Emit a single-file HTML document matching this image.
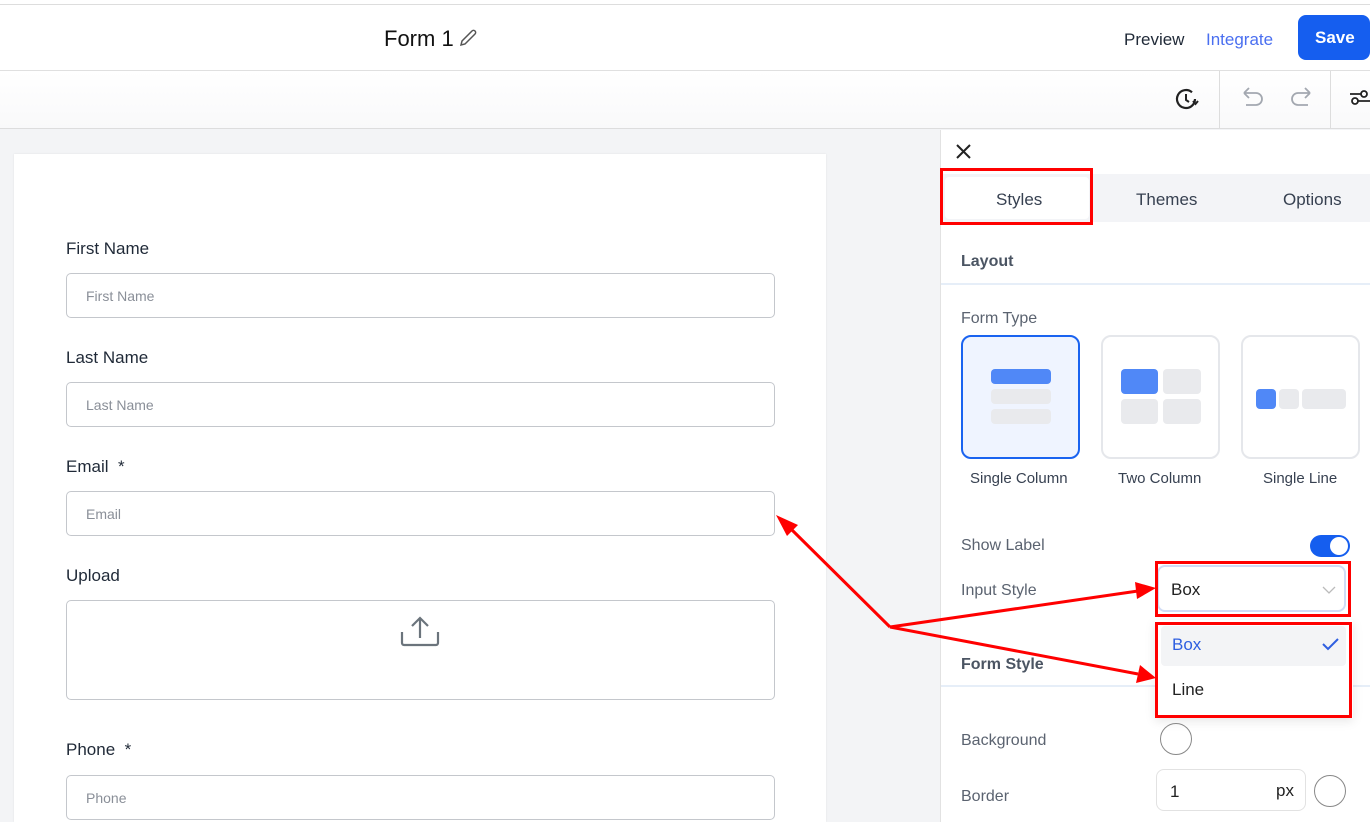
<!DOCTYPE html><html><head><style>
*{box-sizing:border-box;margin:0;padding:0}
html,body{width:1370px;height:822px;overflow:hidden}
body{font-family:"Liberation Sans",sans-serif;background:#f3f4f6;position:relative;color:#1f2937}
.a{position:absolute}
.lbl{font-size:17px;color:#1f2937}
.inp{position:absolute;left:66px;width:709px;height:45px;border:1px solid #c4c7cc;border-radius:5px;background:#fff;font-size:14px;color:#8a8f98;padding:14px 19px}
.pl{font-size:16px;color:#5b6370}
.card{position:absolute;top:335px;width:119px;height:124px;border:2px solid #e5e7eb;border-radius:10px;background:#fff}
.b{position:absolute;border-radius:4px;background:#e9eaed}
.bl{background:#5088f7}
</style></head><body>
<div class="a" style="left:0;top:0;width:1370px;height:4px;background:#fff"></div>
<div class="a" style="left:0;top:4px;width:1370px;height:67px;background:#fff;border-top:1px solid #ddd;border-bottom:1px solid #e0e0e0"></div>
<div class="a" style="left:384px;top:26px;font-size:22px;color:#111">Form 1</div>
<svg class="a" style="left:457px;top:27px" width="22" height="22" viewBox="0 0 22 22"><path d="M4 18l1-4L15 4a2 2 0 013 3L8 17z" fill="none" stroke="#555" stroke-width="1.5"/></svg>
<div class="a" style="left:1124px;top:30px;font-size:17px;color:#1f2937">Preview</div>
<div class="a" style="left:1206px;top:30px;font-size:17px;color:#4a6ff0">Integrate</div>
<div class="a" style="left:1298px;top:15px;width:72px;height:45px;background:#155eef;border-radius:8px;color:#fff;font-weight:bold;font-size:17px;padding:13px 0 0 17px">Save</div>
<div class="a" style="left:0;top:71px;width:1370px;height:58px;background:linear-gradient(#fff,#f9f9fa);border-bottom:1px solid #ddd"></div>
<div class="a" style="left:1219px;top:71px;width:1px;height:57px;background:#ddd"></div>
<div class="a" style="left:1330px;top:71px;width:1px;height:57px;background:#ddd"></div>
<svg class="a" style="left:1174px;top:86px" width="26" height="26" viewBox="0 0 26 26"><path d="M21 13a9 9 0 11-3-6.7" fill="none" stroke="#222" stroke-width="2.2"/><path d="M12 8v6l3 2" fill="none" stroke="#222" stroke-width="2"/><path d="M19 15l2.5 3 2.5-3" fill="none" stroke="#222" stroke-width="2"/></svg>
<svg class="a" style="left:1240px;top:84px" width="30" height="28" viewBox="0 0 30 28"><path d="M4 9h12a6 6 0 010 12H6M4 9l5-5M4 9l5 5" fill="none" stroke="#a3a8b0" stroke-width="1.8"/></svg>
<svg class="a" style="left:1284px;top:84px" width="30" height="28" viewBox="0 0 30 28"><path d="M26 9H14a6 6 0 000 12h10M26 9l-5-5M26 9l-5 5" fill="none" stroke="#a3a8b0" stroke-width="1.8"/></svg>
<svg class="a" style="left:1350px;top:88px" width="20" height="20"><circle cx="14" cy="6" r="3" fill="none" stroke="#222" stroke-width="1.8"/><circle cx="5" cy="13" r="3" fill="none" stroke="#222" stroke-width="1.8"/><path d="M0 6h11M8 13h12" stroke="#222" stroke-width="1.8"/></svg>

<div class="a" style="left:14px;top:154px;width:812px;height:668px;background:#fff;box-shadow:0 0 2px rgba(0,0,0,.08)"></div>
<div class="a lbl" style="left:66px;top:239px">First Name</div><div class="inp" style="top:273px">First Name</div>
<div class="a lbl" style="left:66px;top:348px">Last Name</div><div class="inp" style="top:382px">Last Name</div>
<div class="a lbl" style="left:66px;top:457px">Email&nbsp; *</div><div class="inp" style="top:491px">Email</div>
<div class="a lbl" style="left:66px;top:566px">Upload</div><div class="inp" style="top:600px;height:100px"></div>
<svg class="a" style="left:400px;top:614px" width="40" height="34"><path d="M2 18v11a2 2 0 002 2h32a2 2 0 002-2V18M20 24V4M12 12l8-8 8 8" fill="none" stroke="#6b747c" stroke-width="2.2"/></svg>
<div class="a lbl" style="left:66px;top:740px">Phone&nbsp; *</div><div class="inp" style="top:775px">Phone</div>

<div class="a" style="left:940px;top:130px;width:430px;height:692px;background:#fff;border-left:1px solid #e2e2e2"></div>
<svg class="a" style="left:955px;top:143px" width="17" height="17"><path d="M2 2l13 13M15 2L2 15" stroke="#222" stroke-width="2"/></svg>
<div class="a" style="left:941px;top:174px;width:429px;height:48px;background:#f3f4f7"></div>
<div class="a" style="left:945px;top:177px;width:144px;height:42px;background:#fff;border-radius:4px"></div>
<div class="a" style="left:996px;top:190px;font-size:17px;color:#374151">Styles</div>
<div class="a" style="left:1136px;top:190px;font-size:17px;color:#374151">Themes</div>
<div class="a" style="left:1283px;top:190px;font-size:17px;color:#374151">Options</div>
<div class="a" style="left:940px;top:168px;width:153px;height:57px;border:3px solid #f00"></div>
<div class="a" style="left:961px;top:253px;font-size:16px;font-weight:bold;color:#4b5563">Layout</div>
<div class="a" style="left:941px;top:283px;width:429px;height:2px;background:#e6eef8"></div>
<div class="a pl" style="left:961px;top:310px">Form Type</div>
<div class="card" style="left:961px;border-color:#1a63f0;background:#eff4ff"><div class="b bl" style="left:28px;top:32px;width:60px;height:15px"></div><div class="b" style="left:28px;top:52px;width:60px;height:15px"></div><div class="b" style="left:28px;top:72px;width:60px;height:15px"></div></div>
<div class="card" style="left:1101px"><div class="b bl" style="left:18px;top:32px;width:37px;height:25px"></div><div class="b" style="left:60px;top:32px;width:38px;height:25px"></div><div class="b" style="left:18px;top:62px;width:37px;height:25px"></div><div class="b" style="left:60px;top:62px;width:38px;height:25px"></div></div>
<div class="card" style="left:1241px"><div class="b bl" style="left:13px;top:52px;width:20px;height:20px"></div><div class="b" style="left:36px;top:52px;width:20px;height:20px"></div><div class="b" style="left:59px;top:52px;width:44px;height:20px"></div></div>
<div class="a" style="left:970px;top:470px;font-size:15px;color:#374151">Single Column</div>
<div class="a" style="left:1118px;top:470px;font-size:15px;color:#374151">Two Column</div>
<div class="a" style="left:1263px;top:470px;font-size:15px;color:#374151">Single Line</div>
<div class="a pl" style="left:961px;top:537px">Show Label</div>
<div class="a" style="left:1310px;top:535px;width:40px;height:22px;border-radius:11px;background:#155eef"></div>
<div class="a" style="left:1330px;top:537px;width:18px;height:18px;border-radius:9px;background:#fff"></div>
<div class="a pl" style="left:961px;top:582px">Input Style</div>
<div class="a" style="left:1157px;top:565px;width:189px;height:47px;border:2px solid #d0dcf5;border-radius:8px;background:#fff"></div>
<div class="a" style="left:1171px;top:580px;font-size:17px;color:#222">Box</div>
<svg class="a" style="left:1322px;top:586px" width="14" height="9"><path d="M1 1l6 6 6-6" fill="none" stroke="#bbb" stroke-width="1.3"/></svg>
<div class="a" style="left:1155px;top:561px;width:196px;height:56px;border:3px solid #f00"></div>
<div class="a" style="left:961px;top:656px;font-size:16px;font-weight:bold;color:#4b5563">Form Style</div>
<div class="a" style="left:941px;top:685px;width:429px;height:2px;background:#e6eef8"></div>
<div class="a" style="left:1155px;top:620px;width:198px;height:98px;background:#fff;box-shadow:0 3px 10px rgba(0,0,0,.1)"></div>
<div class="a" style="left:1161px;top:626px;width:185px;height:40px;background:#f3f4f6;border-radius:4px"></div>
<div class="a" style="left:1172px;top:635px;font-size:17px;color:#2f5fe0">Box</div>
<svg class="a" style="left:1322px;top:637px" width="17" height="14"><path d="M1 7l5 5L16 2" fill="none" stroke="#2f5fe0" stroke-width="2"/></svg>
<div class="a" style="left:1172px;top:680px;font-size:17px;color:#222">Line</div>
<div class="a" style="left:1155px;top:622px;width:197px;height:96px;border:3px solid #f00"></div>
<div class="a pl" style="left:961px;top:732px">Background</div>
<div class="a" style="left:1160px;top:723px;width:32px;height:32px;border:1px solid #888;border-radius:50%"></div>
<div class="a pl" style="left:961px;top:788px">Border</div>
<div class="a" style="left:1156px;top:769px;width:150px;height:42px;border:1px solid #e2e2e2;border-radius:8px;background:#fff"></div>
<div class="a" style="left:1170px;top:782px;font-size:17px;color:#222">1</div>
<div class="a" style="left:1276px;top:781px;font-size:17px;color:#222">px</div>
<div class="a" style="left:1314px;top:775px;width:32px;height:32px;border:1px solid #888;border-radius:50%"></div>

<svg class="a" style="left:0;top:0" width="1370" height="822"><g stroke="#f00" stroke-width="3" fill="#f00">
<line x1="890" y1="627" x2="790" y2="528"/><polygon points="776,515 798,525 787,536" stroke="none"/>
<line x1="890" y1="627" x2="1138" y2="591"/><polygon points="1156,588 1135,582 1137,599" stroke="none"/>
<line x1="890" y1="627" x2="1138" y2="674"/><polygon points="1156,678 1140,665 1136,683" stroke="none"/>
</g></svg>
</body></html>
